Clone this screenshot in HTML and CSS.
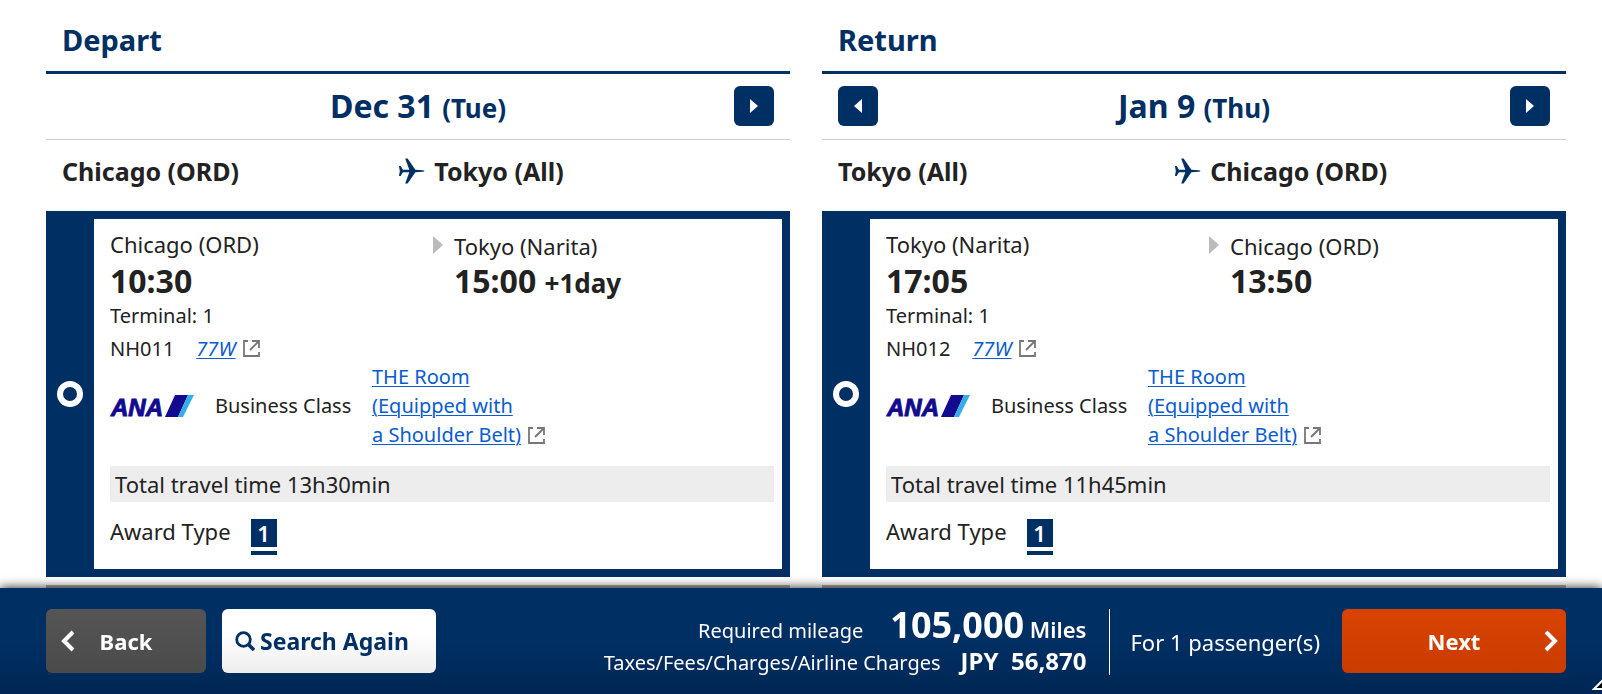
FILE: index.html
```html
<!DOCTYPE html>
<html lang="en">
<head>
<meta charset="utf-8">
<title>Flight selection</title>
<link rel="stylesheet" href="styles.css">
</head>
<body>
<svg class="sprite" aria-hidden="true">
  <symbol id="plane" viewBox="0 0 26 26">
    <path d="M0 8h1.600l2.400 3.700h6.300L6.200 0.500h2.400l7.800 11.200 7 .5q2.100 .3 2.100 .8t-2.100 .8l-7 .5L8.600 25.500H6.200l4.100-11.200H4L1.600 18H0l.8-5z"/>
  </symbol>
  <symbol id="external" viewBox="0 0 17 17">
    <path d="M5 1H1v15h15V12M9 1h7V8M15 2L7 10" fill="none" stroke="currentColor" stroke-width="1.800"/>
  </symbol>
</svg>

<main class="trips">
  <section class="trip">
    <h2 class="trip-title">Depart</h2>
    <div class="date-bar">
      <p class="date">Dec 31 <span class="weekday">(Tue)</span></p>
      <button class="day-button next-day" type="button" aria-label="Next day"><svg width="8" height="14" viewBox="0 0 8 14"><path d="M0 0l8 7-8 7z" fill="#fff"/></svg></button>
    </div>
    <div class="route">
      <span>Chicago (ORD)</span>
      <span class="route-to"><svg class="plane" width="26" height="26"><use href="#plane"/></svg>Tokyo (All)</span>
    </div>
    <article class="flight">
      <label class="pick"><input type="radio" name="depart" checked aria-label="NH011"></label>
      <div class="details">
        <div class="legs">
          <div class="leg">
            <p class="city">Chicago (ORD)</p>
            <p class="time">10:30</p>
            <p class="terminal">Terminal: 1</p>
          </div>
          <div class="leg arrival">
            <p class="city">Tokyo (Narita)</p>
            <p class="time">15:00 <span class="plus-day">+1day</span></p>
          </div>
        </div>
        <p class="number">NH011 <a class="aircraft" href="#"><em>77W</em></a><svg class="external" width="17" height="17"><use href="#external"/></svg></p>
        <div class="cabin">
          <svg class="logo" width="84" height="22" viewBox="0 0 84 22"><text x="1" y="21" class="logo-text">ANA</text><path d="M65 0h13L68 22H55z" fill="#120a8f"/><path d="M78 0h6L73 22h-5z" fill="#35aee6"/></svg>
          <span>Business Class</span>
          <span><a href="#">THE Room<br>(Equipped with<br>a Shoulder Belt)</a><svg class="external" width="17" height="17"><use href="#external"/></svg></span>
        </div>
        <p class="total">Total travel time 13h30min</p>
        <p class="award">Award Type <span class="badge">1</span></p>
      </div>
    </article>
    <div class="flight-next"></div>
  </section>

  <section class="trip">
    <h2 class="trip-title">Return</h2>
    <div class="date-bar">
      <button class="day-button" type="button" aria-label="Previous day"><svg width="8" height="14" viewBox="0 0 8 14"><path d="M8 0L0 7l8 7z" fill="#fff"/></svg></button>
      <p class="date">Jan 9 <span class="weekday">(Thu)</span></p>
      <button class="day-button next-day" type="button" aria-label="Next day"><svg width="8" height="14" viewBox="0 0 8 14"><path d="M0 0l8 7-8 7z" fill="#fff"/></svg></button>
    </div>
    <div class="route">
      <span>Tokyo (All)</span>
      <span class="route-to"><svg class="plane" width="26" height="26"><use href="#plane"/></svg>Chicago (ORD)</span>
    </div>
    <article class="flight">
      <label class="pick"><input type="radio" name="return" checked aria-label="NH012"></label>
      <div class="details">
        <div class="legs">
          <div class="leg">
            <p class="city">Tokyo (Narita)</p>
            <p class="time">17:05</p>
            <p class="terminal">Terminal: 1</p>
          </div>
          <div class="leg arrival">
            <p class="city">Chicago (ORD)</p>
            <p class="time">13:50</p>
          </div>
        </div>
        <p class="number">NH012 <a class="aircraft" href="#"><em>77W</em></a><svg class="external" width="17" height="17"><use href="#external"/></svg></p>
        <div class="cabin">
          <svg class="logo" width="84" height="22" viewBox="0 0 84 22"><text x="1" y="21" class="logo-text">ANA</text><path d="M65 0h13L68 22H55z" fill="#120a8f"/><path d="M78 0h6L73 22h-5z" fill="#35aee6"/></svg>
          <span>Business Class</span>
          <span><a href="#">THE Room<br>(Equipped with<br>a Shoulder Belt)</a><svg class="external" width="17" height="17"><use href="#external"/></svg></span>
        </div>
        <p class="total">Total travel time 11h45min</p>
        <p class="award">Award Type <span class="badge">1</span></p>
      </div>
    </article>
    <div class="flight-next"></div>
  </section>
</main>

<footer class="summary">
  <button class="action back" type="button"><svg width="14" height="22" viewBox="0 0 14 22"><path d="M12 2L3 11l9 9" fill="none" stroke="#fff" stroke-width="4"/></svg><span class="action-text">Back</span></button>
  <button class="action search" type="button"><svg width="20" height="20" viewBox="0 0 20 20"><circle cx="8.500" cy="8.500" r="6.800" fill="none" stroke="#002f63" stroke-width="2.800"/><path d="M13 13l6 6" stroke="#002f63" stroke-width="3.600"/></svg>Search Again</button>
  <div class="costs">
    <p class="cost"><span>Required mileage</span><span class="miles"><strong>105,000</strong> Miles</span></p>
    <p class="cost"><span>Taxes/Fees/Charges/Airline Charges</span><b class="fees">JPY&nbsp; 56,870</b></p>
  </div>
  <p class="passengers">For 1 passenger(s)</p>
  <button class="action next" type="button"><span class="action-text">Next</span><svg width="14" height="22" viewBox="0 0 14 22"><path d="M2 2l9 9-9 9" fill="none" stroke="#fff" stroke-width="4"/></svg></button>
  <svg class="pointer" width="10" height="15" viewBox="0 0 10 15" aria-hidden="true"><path d="M11 1L2 10h9" fill="#000" stroke="#fff" stroke-width="2"/></svg>
</footer>
</body>
</html>
```
FILE: styles.css
```css
* {
  box-sizing: border-box;
}

body {
  margin: 0;
  background: #fff;
  color: #222;
  font-family: "Noto Sans", "Open Sans", sans-serif;
  font-size: 20px;
}

h2,
p {
  margin: 0;
}

a {
  color: #0a5ccf;
  text-decoration: underline;
  text-decoration-thickness: 1px;
  text-underline-offset: 2px;
}

button {
  border: 0;
  padding: 0;
  font: inherit;
}

.sprite {
  position: absolute;
  width: 0;
  height: 0;
}

.logo {
  overflow: visible;
}

.logo-text {
  font: italic bold 24px "Liberation Sans", sans-serif;
  fill: #120a8f;
  stroke: #120a8f;
  stroke-width: 1px;
}

.trips {
  display: grid;
  grid-template-columns: 1fr 1fr;
  gap: 32px;
  padding: 0 36px 0 46px;
}

.trip-title {
  padding: 20px 16px 11px;
  border-bottom: 3px solid #002f63;
  color: #002f63;
  font-size: 29px;
  line-height: 40px;
}

.date-bar {
  display: grid;
  grid-template-columns: 40px 1fr 40px;
  align-items: center;
  padding: 12px 16px 13px;
  border-bottom: 1px solid #ccc;
}

.date {
  grid-column: 2;
  color: #002f63;
  font-size: 32px;
  font-weight: bold;
  line-height: 40px;
  text-align: center;
}

.weekday,
.plus-day {
  font-size: 26px;
  line-height: 1;
}

.day-button {
  display: grid;
  place-items: center;
  width: 40px;
  height: 40px;
  border-radius: 6px;
  background: #002f63;
}

.next-day {
  grid-column: 3;
}

.route {
  display: grid;
  grid-template-columns: 9fr 10fr;
  padding: 15px 16px 24px;
  font-size: 25px;
  font-weight: bold;
  line-height: 32px;
}

.route-to {
  display: flex;
  align-items: center;
  gap: 9px;
}

.plane {
  fill: #002f63;
}

.flight {
  display: grid;
  grid-template-columns: 48px 1fr;
  padding: 8px 8px 8px 0;
  background: #002f63;
}

.flight-next {
  height: 24px;
  margin-top: 8px;
  background: #b0b0b0;
}

.pick {
  display: grid;
  place-items: center;
}

.pick input {
  appearance: none;
  width: 26px;
  height: 26px;
  margin: 0;
  border: 6px solid #fff;
  border-radius: 50%;
  background: #002f63;
}

.details {
  padding: 9px 8px 14px 16px;
  background: #fff;
}

.legs {
  display: grid;
  grid-template-columns: 18fr 19fr;
  margin-bottom: 5px;
}

.city {
  font-size: 22px;
  line-height: 32px;
}

.time {
  font-size: 32px;
  font-weight: bold;
  line-height: 42px;
}

.terminal {
  line-height: 28px;
}

.arrival {
  position: relative;
  padding-left: 21px;
}

.arrival::before {
  content: "";
  position: absolute;
  left: 0;
  top: 8px;
  border-left: 10px solid #bbb;
  border-top: 9px solid transparent;
  border-bottom: 9px solid transparent;
}

.arrival .city {
  line-height: 36px;
}

.arrival .time {
  line-height: 34px;
}

.number {
  display: flex;
  align-items: center;
  line-height: 27px;
}

.aircraft {
  margin-left: 22px;
}

.external {
  margin-left: 7px;
  color: #777;
  vertical-align: -2px;
}

.cabin {
  display: grid;
  grid-template-columns: 84px 136px 1fr;
  align-items: center;
  gap: 21px;
  line-height: 29px;
  white-space: nowrap;
}

.total {
  margin-top: 17px;
  padding: 0 5px;
  background: #ededed;
  font-size: 22px;
  line-height: 36px;
}

.award {
  display: flex;
  gap: 20px;
  margin-top: 17px;
  font-size: 22px;
  line-height: 24px;
}

.badge {
  width: 26px;
  height: 36px;
  border-bottom: 4px solid #002f63;
  background: linear-gradient(#002f63 28px, #fff 28px);
  color: #fff;
  font-weight: 600;
  line-height: 28px;
  text-align: center;
}

.summary {
  position: fixed;
  inset: auto 0 0;
  display: flex;
  align-items: flex-start;
  gap: 16px;
  padding: 21px 36px 17px 46px;
  background: linear-gradient(#002f63 50%, #002755);
  box-shadow: 0 0 10px rgba(0, 0, 0, 0.9);
  color: #fff;
}

.action {
  display: flex;
  align-items: center;
  height: 64px;
  border-radius: 6px;
  color: #fff;
  font-size: 22px;
  font-weight: bold;
}

.action-text {
  flex: 1;
}

.back {
  width: 160px;
  padding: 0 29px 0 15px;
  background: linear-gradient(#555, #4b4b4b);
}

.search {
  gap: 5px;
  width: 214px;
  padding: 0 13px;
  background: linear-gradient(#fff 40%, #ededed);
  color: #002f63;
  font-size: 23px;
  white-space: nowrap;
}

.next {
  width: 224px;
  margin-left: 6px;
  padding: 0 8px 0 22px;
  background: linear-gradient(#d84300, #ca3c00);
}

.costs {
  display: grid;
  gap: 4px;
  margin-left: auto;
}

.cost {
  display: flex;
  align-items: baseline;
  justify-content: flex-end;
  gap: 20px;
  height: 32px;
  line-height: 32px;
}

.miles {
  margin-left: 7px;
  font-size: 22px;
  font-weight: 600;
}

.miles strong {
  font-size: 36px;
  font-weight: 700;
}

.fees {
  font-size: 24px;
}

.passengers {
  margin-left: 7px;
  padding-left: 20px;
  border-left: 1px solid #fff;
  font-size: 22px;
  line-height: 66px;
}

.pointer {
  position: absolute;
  right: 0;
  bottom: 0;
}
```
